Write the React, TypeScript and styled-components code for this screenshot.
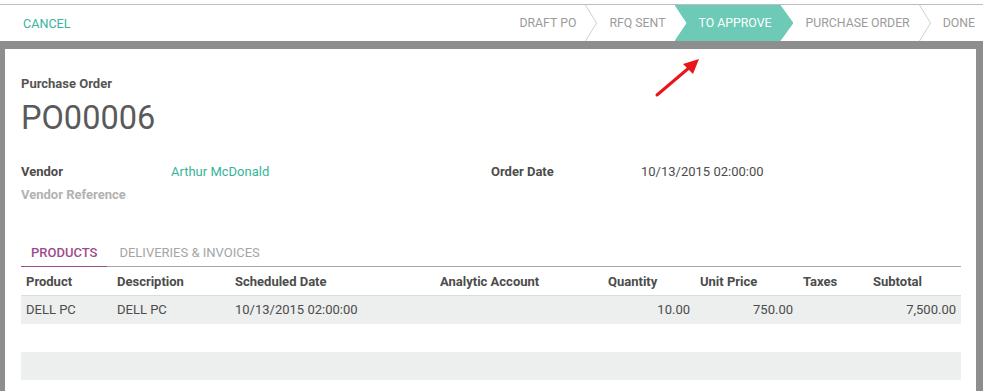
import { FC, Fragment } from 'react';
import styled, { createGlobalStyle } from 'styled-components';

const GlobalStyle = createGlobalStyle`
  html, body {
    margin: 0;
    padding: 0;
    background: #fff;
    font-family: Roboto, 'Liberation Sans', sans-serif;
    color: #4c4c4c;
    overflow: hidden;
  }
`;

const Page = styled.div`
  position: relative;
  width: 983px;
  height: 391px;
  padding-top: 4px;
  box-sizing: border-box;
  display: flex;
  flex-direction: column;
`;

const StatusBar = styled.div`
  display: flex;
  align-items: stretch;
  justify-content: space-between;
  height: 36px;
  border-top: 1px solid #bdbdbd;
  background: #fff;
  font-size: 12.3px;
  text-transform: uppercase;
`;

const CancelButton = styled.button`
  border: 0;
  background: none;
  padding: 0 0 0 23px;
  font: inherit;
  font-size: 12.6px;
  text-transform: uppercase;
  color: #36b59b;
  cursor: pointer;
`;

const Steps = styled.div`
  display: flex;
  align-items: stretch;
  margin-right: -1px;
`;

const Step = styled.div<{ $active?: boolean }>`
  display: flex;
  align-items: center;
  white-space: nowrap;
  color: ${(p) => (p.$active ? '#fff' : '#9b9b9b')};
  padding: ${(p) => (p.$active ? '0 22px 0 24px' : '0 9px 0 12px')};
  background: ${(p) => (p.$active ? '#6ccab6' : 'transparent')};
  clip-path: ${(p) =>
    p.$active ? 'polygon(0 0, calc(100% - 13px) 0, 100% 50%, calc(100% - 13px) 100%, 0 100%, 12px 50%)' : 'none'};
`;

const ChevronSvg = styled.svg`
  width: 12px;
  height: 36px;
  flex-shrink: 0;
`;

const Chevron: FC = () => (
  <ChevronSvg viewBox="0 0 12 36">
    <polyline points="0.5,0 11.5,18 0.5,36" fill="none" stroke="#cfcfcf" strokeWidth="1" />
  </ChevronSvg>
);

const Backdrop = styled.div`
  flex: 1;
  background: #8e8e8e;
  padding: 8px 7px 0 5px;
  display: flex;
`;

const Sheet = styled.div`
  flex: 1;
  background: #fff;
  padding: 26px 15px 0 16px;
`;

const DocLabel = styled.div`
  font-size: 13px;
  font-weight: 700;
  color: #555;
  line-height: 18px;
`;

const DocName = styled.h1`
  margin: 7px 0 0;
  font-size: 32.5px;
  font-weight: 400;
  color: #5a5a5a;
  line-height: 36px;
`;

const FieldGroups = styled.div`
  display: grid;
  grid-template-columns: 470px 470px;
  margin-top: 24px;
`;

const FieldGroup = styled.div`
  display: flex;
  flex-direction: column;
`;

const FieldRow = styled.div`
  display: grid;
  grid-template-columns: 150px 1fr;
  height: 23px;
  align-items: center;
  font-size: 13px;
`;

const FieldLabel = styled.span<{ $muted?: boolean }>`
  font-weight: 700;
  color: ${(p) => (p.$muted ? '#b2b2b2' : '#4c4c4c')};
`;

const FieldValue = styled.span<{ $link?: boolean }>`
  color: ${(p) => (p.$link ? '#36b59b' : '#4c4c4c')};
`;

const TabList = styled.div`
  display: flex;
  margin-top: 32px;
  border-bottom: 1px solid #a9a9a9;
  width: 940px;
`;

const Tab = styled.div<{ $active?: boolean }>`
  padding: 0 10px;
  height: 28px;
  display: flex;
  align-items: center;
  margin-right: 2px;
  margin-bottom: -1px;
  font-size: 13px;
  text-transform: uppercase;
  font-weight: ${(p) => (p.$active ? 500 : 400)};
  color: ${(p) => (p.$active ? '#9c4d8c' : '#a5a5a5')};
  border-bottom: 1px solid ${(p) => (p.$active ? '#9c4d8c' : 'transparent')};
`;

const Table = styled.table`
  width: 940px;
  table-layout: fixed;
  border-collapse: collapse;
  font-size: 13px;
`;

const HeadCell = styled.th`
  height: 28px;
  padding: 0 5px;
  text-align: left;
  font-weight: 700;
  color: #4c4c4c;
  border-bottom: 1px solid #dcdcdc;
`;

const Row = styled.tr<{ $striped?: boolean }>`
  height: 28px;
  background: ${(p) => (p.$striped ? '#edeeee' : '#fff')};
`;

const Cell = styled.td<{ $num?: boolean }>`
  padding: 0 5px 0 5px;
  text-align: ${(p) => (p.$num ? 'right' : 'left')};
  color: #4c4c4c;
  white-space: nowrap;
`;

const ArrowSvg = styled.svg`
  position: absolute;
  left: 652px;
  top: 54px;
  width: 52px;
  height: 46px;
`;

const columns = [
  { label: 'Product', width: 91 },
  { label: 'Description', width: 118 },
  { label: 'Scheduled Date', width: 205 },
  { label: 'Analytic Account', width: 168 },
  { label: 'Quantity', width: 92 },
  { label: 'Unit Price', width: 103 },
  { label: 'Taxes', width: 70 },
  { label: 'Subtotal', width: 93 },
];

const steps = ['Draft PO', 'RFQ Sent', 'To Approve', 'Purchase Order', 'Done'];
const activeStep = 'To Approve';

const App: FC = () => {
  return (
    <Page>
      <GlobalStyle />
      <StatusBar>
        <CancelButton>Cancel</CancelButton>
        <Steps>
          {steps.map((s, i) => {
            const next = steps[i + 1];
            const showChevron = next && s !== activeStep && next !== activeStep;
            return (
              <Fragment key={s}>
                <Step $active={s === activeStep}>{s}</Step>
                {showChevron && <Chevron />}
              </Fragment>
            );
          })}
        </Steps>
      </StatusBar>
      <Backdrop>
        <Sheet>
          <DocLabel>Purchase Order</DocLabel>
          <DocName>PO00006</DocName>
          <FieldGroups>
            <FieldGroup>
              <FieldRow>
                <FieldLabel>Vendor</FieldLabel>
                <FieldValue $link>Arthur McDonald</FieldValue>
              </FieldRow>
              <FieldRow>
                <FieldLabel $muted>Vendor Reference</FieldLabel>
                <FieldValue />
              </FieldRow>
            </FieldGroup>
            <FieldGroup>
              <FieldRow>
                <FieldLabel>Order Date</FieldLabel>
                <FieldValue>10/13/2015 02:00:00</FieldValue>
              </FieldRow>
            </FieldGroup>
          </FieldGroups>
          <TabList>
            <Tab $active>Products</Tab>
            <Tab>Deliveries &amp; Invoices</Tab>
          </TabList>
          <Table>
            <colgroup>
              {columns.map((c) => (
                <col key={c.label} style={{ width: c.width }} />
              ))}
            </colgroup>
            <thead>
              <tr>
                {columns.map((c) => (
                  <HeadCell key={c.label}>{c.label}</HeadCell>
                ))}
              </tr>
            </thead>
            <tbody>
              <Row $striped>
                <Cell>DELL PC</Cell>
                <Cell>DELL PC</Cell>
                <Cell>10/13/2015 02:00:00</Cell>
                <Cell />
                <Cell $num>10.00</Cell>
                <Cell $num>750.00</Cell>
                <Cell />
                <Cell $num>7,500.00</Cell>
              </Row>
              <Row>
                <Cell colSpan={8} />
              </Row>
              <Row $striped>
                <Cell colSpan={8} />
              </Row>
            </tbody>
          </Table>
        </Sheet>
      </Backdrop>
      <ArrowSvg viewBox="0 0 52 46">
        <line x1="5" y1="41" x2="38" y2="13" stroke="#e8161b" strokeWidth="3" strokeLinecap="round" />
        <polygon points="47,5 31,10 41,20" fill="#e8161b" />
      </ArrowSvg>
    </Page>
  );
};

export default App;
